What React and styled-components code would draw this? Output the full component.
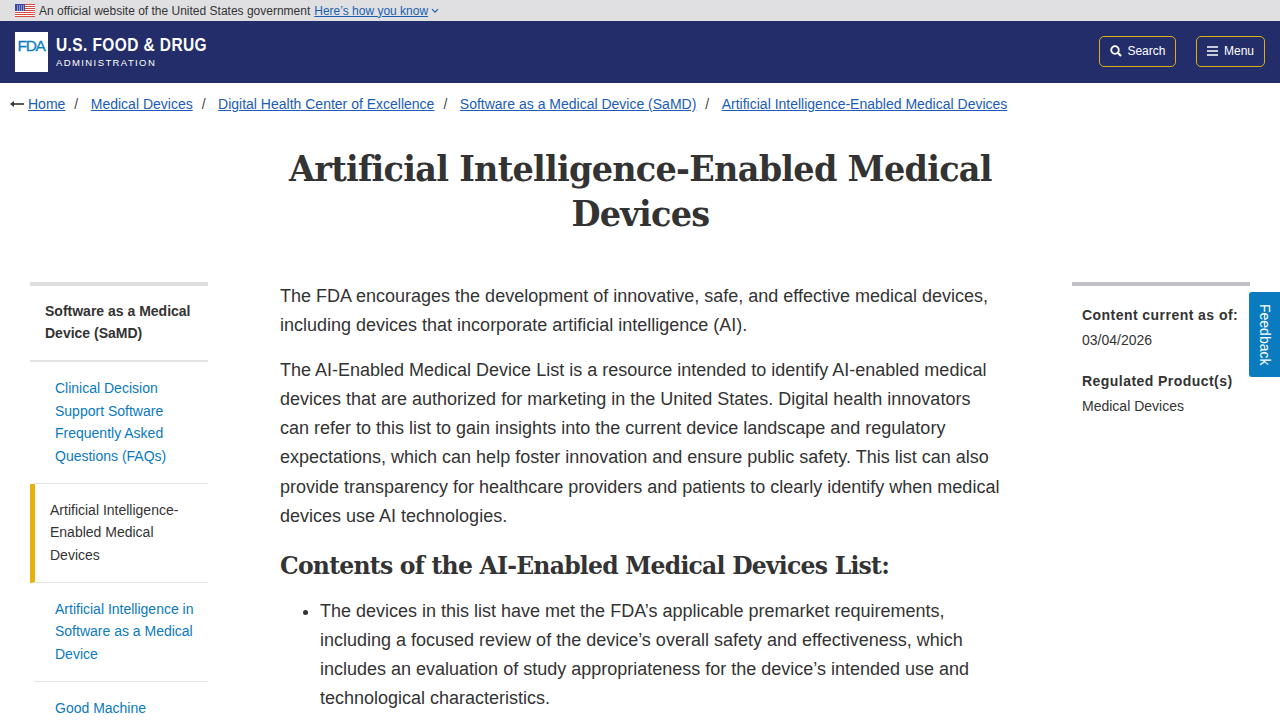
import React from 'react';
import styled, { createGlobalStyle } from 'styled-components';

const GlobalStyle = createGlobalStyle`
	html, body {
		margin: 0;
		padding: 0;
		background: #fff;
		height: 720px;
		overflow: hidden;
	}
	body {
		font-family: 'Liberation Sans', Arial, sans-serif;
		color: #333;
	}
	* {
		box-sizing: border-box;
	}
`;

const Page = styled.div`
	position: relative;
	width: 1280px;
	height: 720px;
	overflow: hidden;
`;

const GovBanner = styled.div`
	height: 21px;
	background: #e0e0e3;
	display: flex;
	align-items: center;
	gap: 4px;
	padding-left: 15px;
	font-size: 12px;
	color: #333;
`;

const GovLink = styled.a`
	color: #1b5fae;
	text-decoration: underline;
	display: inline-flex;
	align-items: center;
	gap: 3px;
`;

const Masthead = styled.header`
	height: 62px;
	background: #232d69;
	display: flex;
	align-items: center;
	justify-content: space-between;
	padding: 0 15px;
`;

const Brand = styled.div`
	display: flex;
	align-items: center;
	gap: 8px;
	margin-top: -1px;
`;

const LogoBox = styled.div`
	width: 33px;
	height: 40px;
	background: #fff;
	display: flex;
	align-items: center;
	justify-content: center;
	color: #0a7fc0;
	font-size: 15.5px;
	letter-spacing: -1.4px;
	padding: 0 1px 11px 0;
	-webkit-text-stroke: 0.3px #0a7fc0;
`;

const BrandText = styled.div`
	display: flex;
	flex-direction: column;
	align-items: flex-start;
	color: #fff;
	margin-top: -1px;
`;

// the wordmark is a condensed face, no narrow family is installed so squeeze it
const BrandTitle = styled.span`
	display: inline-block;
	font-size: 18.5px;
	font-weight: 700;
	letter-spacing: 0.5px;
	line-height: 20px;
	white-space: nowrap;
	transform: scaleX(0.836);
	transform-origin: left center;
`;

const BrandSub = styled.span`
	font-size: 9.5px;
	letter-spacing: 1.4px;
	line-height: 11px;
	margin-top: 2px;
`;

const HeadActions = styled.div`
	display: flex;
	gap: 20px;
	margin-top: -1px;
`;

const HeadButton = styled.button`
	height: 31px;
	padding: 0 10px 1px;
	background: transparent;
	border: 1px solid #e0ad12;
	border-radius: 5px;
	color: #fff;
	font-family: inherit;
	font-size: 12px;
	display: flex;
	align-items: center;
	gap: 5.5px;
`;

const Crumbs = styled.nav`
	height: 42px;
	display: flex;
	align-items: center;
	padding-left: 10px;
	font-size: 14px;
`;

const CrumbLink = styled.a`
	color: #1a5cb8;
	text-decoration: underline;
`;

const Sep = styled.span`
	color: #444;
	margin: 0 12.5px 0 9px;
`;

const Title = styled.h1`
	margin: 0;
	padding-top: 21px;
	height: 157px;
	text-align: center;
	font-family: 'DejaVu Serif', Georgia, serif;
	font-weight: 700;
	font-size: 36px;
	line-height: 45px;
	letter-spacing: -0.8px;
	color: #333;
	width: 100%;
`;

// DejaVu Serif runs wider than the heading face, so squeeze it to the same measure
const TitleText = styled.span`
	display: inline-block;
	transform: scaleX(0.931);
`;

const Layout = styled.div`
	display: flex;
	align-items: flex-start;
`;

const SideNav = styled.aside`
	width: 178px;
	margin-left: 30px;
	border-top: 4px solid #dfdfe2;
	font-size: 14px;
	line-height: 22.5px;
`;

const NavHead = styled.div`
	padding: 14px 10px 16px 15px;
	font-weight: 700;
	line-height: 22px;
	color: #333;
	border-bottom: 2px solid #e4e4e6;
`;

const NavItem = styled.a`
	display: block;
	margin-left: ${(p) => (p.$active ? '0' : '4px')};
	padding: ${(p) => (p.$active ? '15px 10px 15.5px 15px' : '15px 10px 15.5px 21px')};
	color: ${(p) => (p.$active ? '#333' : '#0a79c0')};
	border-bottom: ${(p) => (p.$last ? 'none' : '1px solid #e4e4e6')};
	border-left: ${(p) => (p.$active ? '5px solid #e8b00f' : 'none')};
`;

const Main = styled.main`
	width: 720px;
	margin-left: 72px;
	font-size: 18px;
	line-height: 29.2px;
	color: #333;
`;

const Para = styled.p`
	margin: 0 0 15.35px;
`;

const SubHead = styled.h2`
	margin: 0 0 15px;
	padding-top: 3.4px;
	font-family: 'DejaVu Serif', Georgia, serif;
	font-size: 23.5px;
	line-height: 32px;
	letter-spacing: -0.76px;
	font-weight: 700;
	color: #333;
`;

const Bullets = styled.ul`
	margin: 0;
	padding-left: 40px;
`;

const Aside = styled.aside`
	width: 178px;
	margin-left: 72px;
	border-top: 4px solid #c0c0c4;
	padding: 18px 0 0 10px;
	font-size: 14px;
`;

const MetaLabel = styled.div`
	font-weight: 700;
	letter-spacing: 0.45px;
	line-height: 22px;
`;

const MetaValue = styled.div`
	line-height: 22px;
	margin: 3px 0 19px;
`;

const Feedback = styled.a`
	position: absolute;
	left: 1249px;
	top: 292px;
	width: 31px;
	height: 85px;
	background: #0a7bbf;
	border-radius: 3px 0 0 3px;
	color: #fff;
	font-size: 14px;
	display: flex;
	align-items: center;
	justify-content: center;
	writing-mode: vertical-rl;
`;

const Flag = () => (
	<svg width="20" height="13" viewBox="0 0 20 13">
		<rect width="20" height="13" fill="#fff" />
		{[0, 2, 4, 6, 8, 10, 12].map((y) => (
			<rect key={y} y={y} width="20" height="1" fill="#d9493f" />
		))}
		<rect width="10" height="7" fill="#3c4aa6" />
		{[1.5, 3.5, 5.5].map((y) =>
			[2, 4, 6, 8].map((x) => <rect key={`${x}${y}`} x={x} y={y} width="1" height="1" fill="#d8dcf2" />)
		)}
	</svg>
);

const Chevron = () => (
	<svg width="8" height="6" viewBox="0 0 8 6">
		<path d="M1 1.2 L4 4.2 L7 1.2" fill="none" stroke="#1b5fae" strokeWidth="1.2" />
	</svg>
);

const BackArrow = () => (
	<svg width="14" height="8" viewBox="0 0 14 8" style={{ marginRight: 4 }}>
		<path d="M14 4 H3" stroke="#333" strokeWidth="1.6" />
		<path d="M0 4 L4 1 V7 Z" fill="#333" />
	</svg>
);

const SearchIcon = () => (
	<svg width="12" height="12" viewBox="0 0 12 12">
		<circle cx="5" cy="5" r="3.8" fill="none" stroke="#fff" strokeWidth="1.8" />
		<path d="M7.8 7.8 L11 11" stroke="#fff" strokeWidth="2.2" />
	</svg>
);

const MenuIcon = () => (
	<svg width="11" height="10" viewBox="0 0 11 10">
		<path d="M0 1 H11 M0 5 H11 M0 9 H11" stroke="#fff" strokeWidth="1.7" />
	</svg>
);

const crumbs = [
	'Medical Devices',
	'Digital Health Center of Excellence',
	'Software as a Medical Device (SaMD)',
];

export default function App() {
	return (
		<Page>
			<GlobalStyle />
			<GovBanner>
				<Flag />
				<span>An official website of the United States government</span>
				<GovLink>
					Here’s how you know <Chevron />
				</GovLink>
			</GovBanner>
			<Masthead>
				<Brand>
					<LogoBox>FDA</LogoBox>
					<BrandText>
						<BrandTitle>U.S. FOOD &amp; DRUG</BrandTitle>
						<BrandSub>ADMINISTRATION</BrandSub>
					</BrandText>
				</Brand>
				<HeadActions>
					<HeadButton>
						<SearchIcon />
						Search
					</HeadButton>
					<HeadButton>
						<MenuIcon />
						Menu
					</HeadButton>
				</HeadActions>
			</Masthead>
			<Crumbs>
				<BackArrow />
				<CrumbLink>Home</CrumbLink>
				<Sep>/</Sep>
				{crumbs.map((c) => (
					<React.Fragment key={c}>
						<CrumbLink>{c}</CrumbLink>
						<Sep>/</Sep>
					</React.Fragment>
				))}
				<CrumbLink>Artificial Intelligence-Enabled Medical Devices</CrumbLink>
			</Crumbs>
			<Title>
				<TitleText>
					Artificial Intelligence-Enabled Medical
					<br />
					Devices
				</TitleText>
			</Title>
			<Layout>
				<SideNav>
					<NavHead>
						Software as a Medical
						<br />
						Device (SaMD)
					</NavHead>
					<NavItem>
						Clinical Decision
						<br />
						Support Software
						<br />
						Frequently Asked
						<br />
						Questions (FAQs)
					</NavItem>
					<NavItem $active>
						Artificial Intelligence-
						<br />
						Enabled Medical
						<br />
						Devices
					</NavItem>
					<NavItem>
						Artificial Intelligence in
						<br />
						Software as a Medical
						<br />
						Device
					</NavItem>
					<NavItem $last>Good Machine</NavItem>
				</SideNav>
				<Main>
					<Para>
						The FDA encourages the development of innovative, safe, and effective medical devices, including devices that incorporate artificial intelligence (AI).
					</Para>
					<Para>
						The AI-Enabled Medical Device List is a resource intended to identify AI-enabled medical devices that are authorized for marketing in the United States. Digital health innovators can refer to this list to gain insights into the current device landscape and regulatory expectations, which can help foster innovation and ensure public safety. This list can also provide transparency for healthcare providers and patients to clearly identify when medical devices use AI technologies.
					</Para>
					<SubHead>Contents of the AI-Enabled Medical Devices List:</SubHead>
					<Bullets>
						<li>
							The devices in this list have met the FDA’s applicable premarket requirements, including a focused review of the device’s overall safety and effectiveness, which includes an evaluation of study appropriateness for the device’s intended use and technological characteristics.
						</li>
					</Bullets>
				</Main>
				<Aside>
					<MetaLabel>Content current as of:</MetaLabel>
					<MetaValue>03/04/2026</MetaValue>
					<MetaLabel>Regulated Product(s)</MetaLabel>
					<MetaValue>Medical Devices</MetaValue>
				</Aside>
			</Layout>
			<Feedback>Feedback</Feedback>
		</Page>
	);
}
